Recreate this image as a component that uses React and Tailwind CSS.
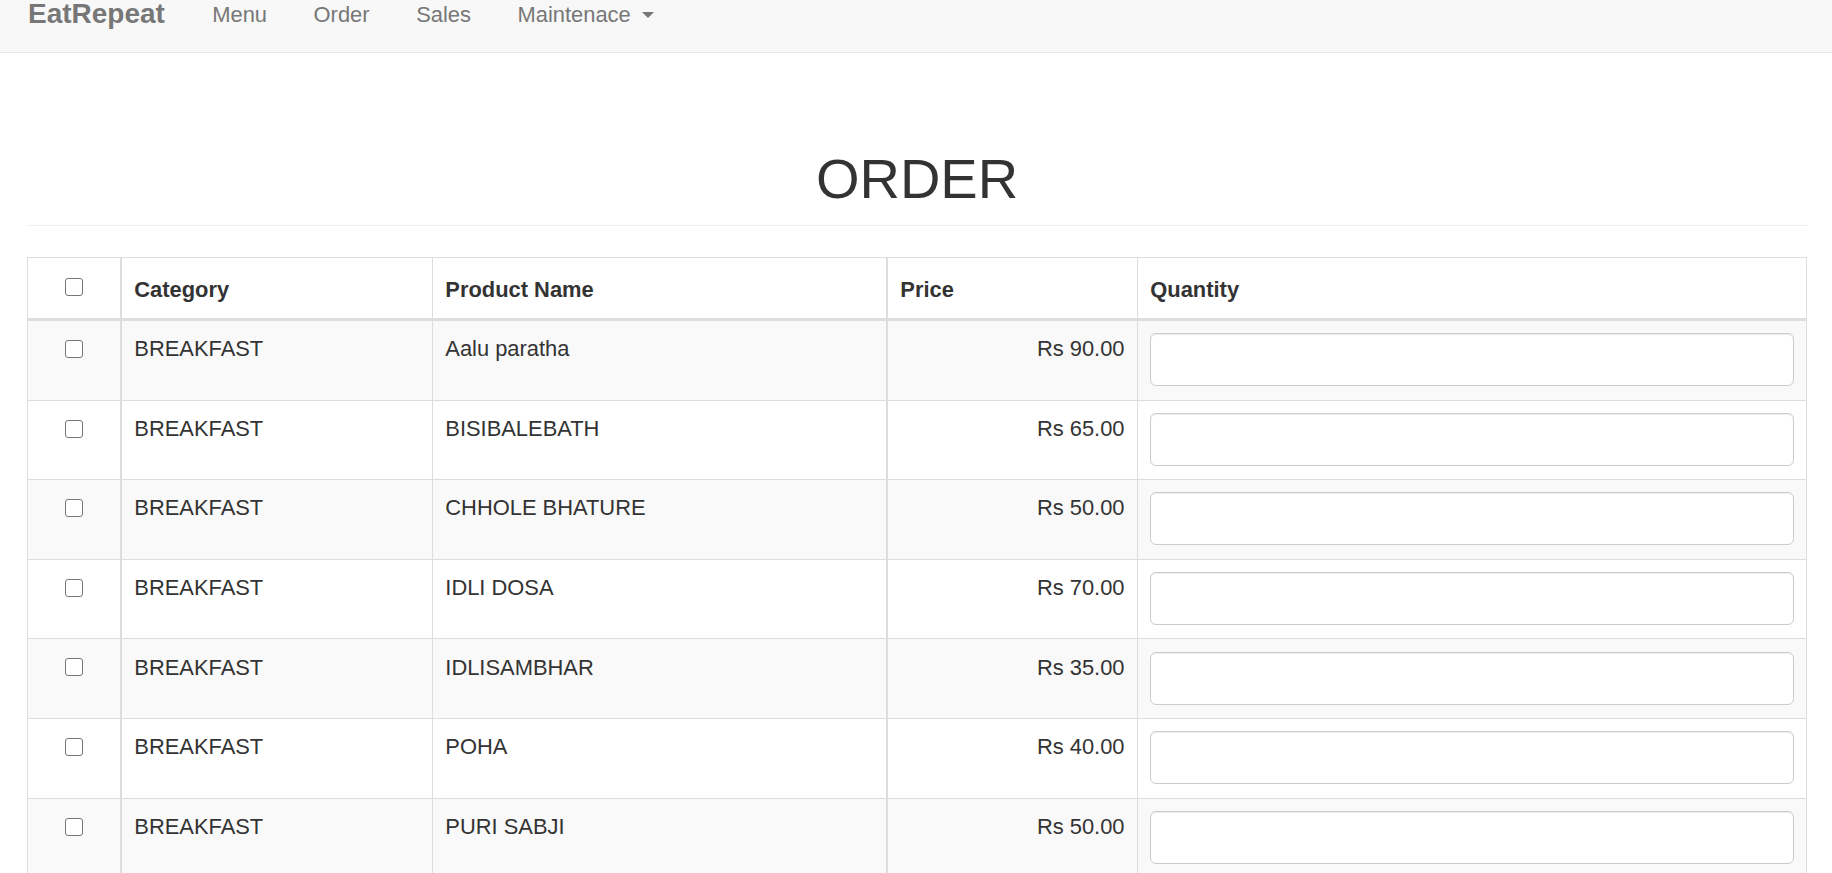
import React from "react";

const rows = [
  ["BREAKFAST", "Aalu paratha", "Rs 90.00"],
  ["BREAKFAST", "BISIBALEBATH", "Rs 65.00"],
  ["BREAKFAST", "CHHOLE BHATURE", "Rs 50.00"],
  ["BREAKFAST", "IDLI DOSA", "Rs 70.00"],
  ["BREAKFAST", "IDLISAMBHAR", "Rs 35.00"],
  ["BREAKFAST", "POHA", "Rs 40.00"],
  ["BREAKFAST", "PURI SABJI", "Rs 50.00"],
];

function Check() {
  return (
    <input
      type="checkbox"
      className="appearance-none block w-[18px] h-[18px] rounded-[3px] border border-[#767676] bg-white"
    />
  );
}

export default function App() {
  return (
    <div className="h-[873px] overflow-hidden bg-white text-[#333] font-['Liberation_Sans',Arial,sans-serif]">
      <nav className="h-[53px] bg-[#f8f8f8] border-b border-[#e7e7e7] flex items-start">
        <a className="pl-[28px] pr-[24px] text-[28px] font-bold leading-[31px] text-[#777] -mt-[2px]">
          EatRepeat
        </a>
        {["Menu", "Order", "Sales"].map((t) => (
          <a key={t} className="px-[23.3px] text-[21.9px] leading-[31px] text-[#777] -mt-px">
            {t}
          </a>
        ))}
        <a className="px-[23.3px] text-[21.9px] leading-[31px] text-[#777] -mt-px">
          Maintenace{" "}
          <span className="inline-block w-0 h-0 ml-[5px] align-middle relative -top-[1px] border-t-[6px] border-t-[#777] border-x-[6px] border-x-transparent" />
        </a>
      </nav>

      <div className="pl-[27px] pr-[25px]">
        <div className="mt-[95px] pb-[16px] border-b border-[#eee] text-center">
          <h1 className="text-[56px] leading-[61px] font-normal">ORDER</h1>
        </div>

        <div className="mt-[31px] border-x border-t border-[#ddd] text-[21.9px] leading-[30.8px]">
          <div className="flex h-[63px] border-b-[3px] border-[#ddd] font-bold">
            <div className="w-[92px] shrink-0 flex justify-center pt-[19.5px]">
              <Check />
            </div>
            <div className="w-[312px] shrink-0 border-l-2 border-[#ddd] px-[12.3px] pt-[16.5px]">Category</div>
            <div className="w-[454px] shrink-0 border-l border-[#ddd] px-[12.3px] pt-[16.5px]">Product Name</div>
            <div className="w-[251px] shrink-0 border-l-2 border-[#ddd] px-[12.3px] pt-[16.5px]">Price</div>
            <div className="flex-1 border-l border-[#ddd] px-[12.3px] pt-[16.5px]">Quantity</div>
          </div>

          {rows.map(([cat, name, price], i) => (
            <div
              key={name}
              className={
                "flex h-[79.6px] border-b border-[#ddd] " + (i % 2 === 0 ? "bg-[#f9f9f9]" : "bg-white")
              }
            >
              <div className="w-[92px] shrink-0 flex justify-center pt-[19px]">
                <Check />
              </div>
              <div className="w-[312px] shrink-0 border-l-2 border-[#ddd] px-[12.3px] pt-[13.3px]">{cat}</div>
              <div className="w-[454px] shrink-0 border-l border-[#ddd] px-[12.3px] pt-[13.3px]">{name}</div>
              <div className="w-[251px] shrink-0 border-l-2 border-[#ddd] pl-[12.3px] pr-[12.5px] pt-[13.3px] text-right">
                {price}
              </div>
              <div className="flex-1 border-l border-[#ddd] px-[12.3px] pt-[12.3px]">
                <input
                  type="text"
                  className="block w-full h-[53px] border border-[#ccc] rounded-[6px] bg-white shadow-[inset_0_1px_1px_rgba(0,0,0,0.075)]"
                />
              </div>
            </div>
          ))}
        </div>
      </div>
    </div>
  );
}
